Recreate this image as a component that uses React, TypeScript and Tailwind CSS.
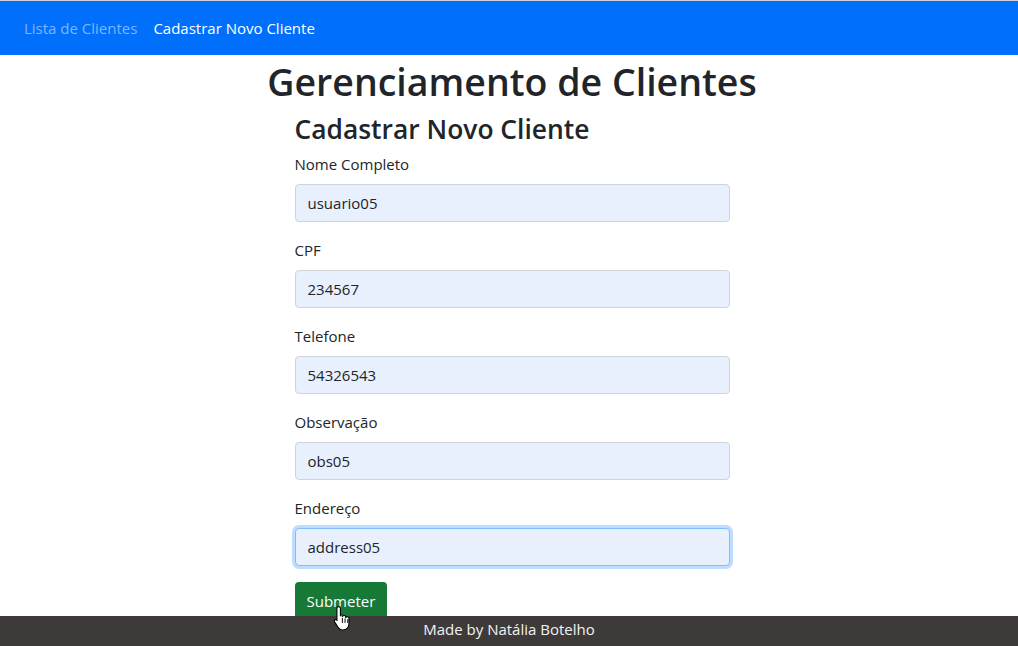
const fields = [
  { label: 'Nome Completo', value: 'usuario05' },
  { label: 'CPF', value: '234567' },
  { label: 'Telefone', value: '54326543' },
  { label: 'Observação', value: 'obs05' },
  { label: 'Endereço', value: 'address05', focused: true }
];

const HandCursor = () => (
  <svg width="20" height="26" viewBox="0 0 18 24" className="absolute left-[333px] top-[605px]">
    <path
      d="M5 1.5c.9 0 1.6.7 1.6 1.6V10l.2-1.2c.9 0 1.6.6 1.6 1.4v.6c.2-.7.9-1.1 1.6-1.1.9 0 1.5.6 1.5 1.4v.7c.2-.6.8-1 1.5-1 .9 0 1.5.7 1.5 1.5v4.6c0 3.6-2.3 6.1-5.6 6.1H8.3c-1.6 0-2.8-.8-3.7-2.1L1.3 15.8c-.5-.8-.3-1.7.4-2.1.7-.4 1.5-.2 2 .5l-.3-.4V3.1C3.4 2.2 4.1 1.5 5 1.5z"
      fill="#ffffff"
      stroke="#000000"
      strokeWidth="1"
      strokeLinejoin="round"
    />
    <path d="M8.4 12v4.5M10.9 12.5v4M13.4 13v3.5" stroke="#000000" strokeWidth="0.9" />
  </svg>
);

const App = () => {
  return (
    <div className="relative flex h-[646px] w-[1018px] flex-col overflow-hidden bg-white font-['Open_Sans',sans-serif] text-[#212529]">
      <nav className="flex h-[55px] shrink-0 items-center gap-4 border-t border-[#cfd4da] bg-[#006ffc] pl-6 text-[15px]">
        <a href="#" className="text-[#7fb5fd]">
          Lista de Clientes
        </a>
        <a href="#" className="text-white">
          Cadastrar Novo Cliente
        </a>
      </nav>

      <main className="flex flex-1 flex-col items-center pl-[6px]">
        <h1 className="mt-[5px] text-[37.5px] font-semibold leading-[43px]">Gerenciamento de Clientes</h1>

        <form className="w-[435px]">
          <h2 className="mt-[10px] text-[26.4px] font-semibold leading-[32px]">Cadastrar Novo Cliente</h2>

          {fields.map((f) => (
            <div key={f.label} className="mt-[8px] mb-[16px] first-of-type:mt-[7px]">
              <label className="block text-[15px] leading-[24px]">{f.label}</label>
              <input
                readOnly
                value={f.value}
                className={
                  f.focused
                    ? 'mt-[8px] block h-[38px] w-full rounded-[4px] border border-[#80bdff] bg-[#e8f0fe] px-3 text-[15px] text-[#212529] shadow-[0_0_0_3px_rgba(0,123,255,0.25)] outline-none'
                    : 'mt-[8px] block h-[38px] w-full rounded-[4px] border border-[#ced4da] bg-[#e8f0fe] px-3 text-[15px] text-[#212529] outline-none'
                }
              />
            </div>
          ))}

          <button type="button" className="h-[38px] rounded-[4px] bg-[#167a36] px-3 text-[15px] text-white">
            Submeter
          </button>
        </form>
      </main>

      <footer className="absolute bottom-0 left-0 flex h-[30px] w-full items-center justify-center bg-[#3e3a39] pb-[3px] text-[15px] text-[#f2f2f2]">
        Made by Natália Botelho
      </footer>

      <HandCursor />
    </div>
  );
};

export default App;
